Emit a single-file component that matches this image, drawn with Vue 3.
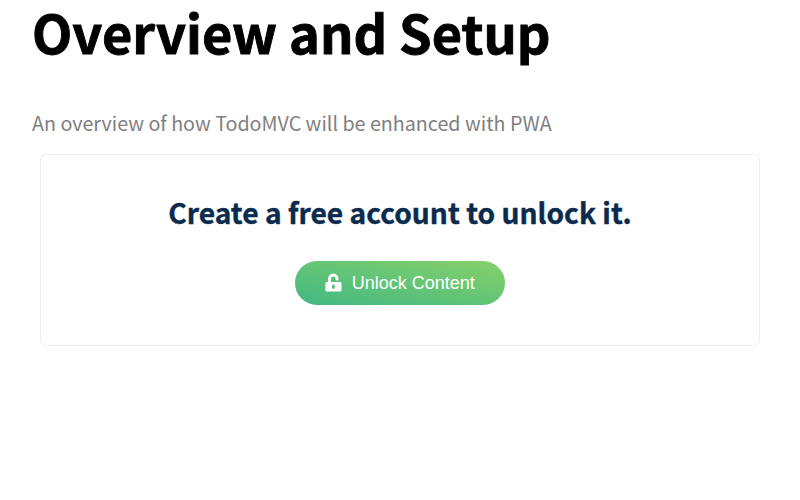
<script setup>
</script>

<template>
  <main class="page">
    <h1>Overview and Setup</h1>
    <p class="lead">An overview of how TodoMVC will be enhanced with PWA</p>
    <section class="card">
      <h2>Create a free account to unlock it.</h2>
      <button class="unlock" type="button">
        <svg class="icon" viewBox="0 0 18 20" aria-hidden="true">
          <path fill="#fff" fill-rule="evenodd" d="M3.100 9V5.700a5.200 5.200 0 0 1 10.400 0v.800a1 1 0 0 1-1 1h-.9a1 1 0 0 1-1-1v-.8a2.300 2.300 0 0 0-4.600 0V9h9a1.500 1.500 0 0 1 1.500 1.500v6.400a1.500 1.500 0 0 1-1.500 1.500H1.900a1.500 1.500 0 0 1-1.500-1.500v-6.400A1.500 1.500 0 0 1 1.900 9zM8.400 11.500a1.400 1.400 0 0 0-1.400 1.400v1.600a1.400 1.400 0 0 0 2.800 0v-1.600a1.400 1.400 0 0 0-1.400-1.400z" />
        </svg>
        <span>Unlock Content</span>
      </button>
    </section>
  </main>
</template>

<style>
body { margin: 0; background: #fff; }
</style>

<style scoped>
.page {
  box-sizing: border-box;
  height: 500px;
  padding: 0 32px;
  font-family: "Noto Sans CJK SC", "Noto Sans", sans-serif;
}
h1 {
  margin: 0;
  font-size: 52.3px;
  font-weight: 700;
  line-height: 62px;
  color: #000;
  white-space: nowrap;
  -webkit-text-stroke: 0.9px #000;
}
.lead {
  margin: 45px 0 0;
  font-size: 19.7px;
  line-height: 32px;
  color: #7f7f7f;
}
.card {
  box-sizing: border-box;
  margin: 15px 8px 0;
  height: 191.5px;
  padding: 34px 0 0;
  border: 1px solid #eee;
  border-radius: 6px;
  display: flex;
  flex-direction: column;
  align-items: center;
}
h2 {
  margin: 0 0 26px;
  font-size: 28.2px;
  font-weight: 700;
  line-height: 46px;
  color: #0a2b4e;
  -webkit-text-stroke: 0.4px #0a2b4e;
}
.unlock {
  display: flex;
  align-items: center;
  justify-content: center;
  gap: 8.4px;
  width: 209.4px;
  height: 44px;
  padding: 0;
  border: 0;
  border-radius: 22px;
  background: linear-gradient(to top right, #41b883, #86d169);
  color: #fff;
  font: 18px "Liberation Sans", Arial, sans-serif;
}
.icon { width: 18px; height: 20px; }
</style>
